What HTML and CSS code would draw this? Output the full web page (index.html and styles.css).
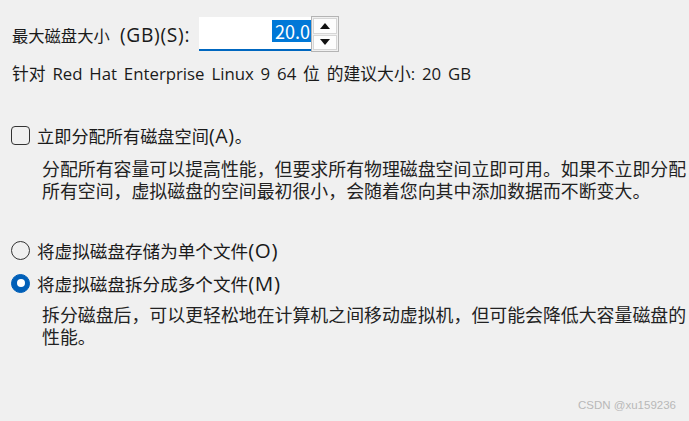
FILE: index.html
```html
<!DOCTYPE html>
<html lang="zh-CN">
<head>
<meta charset="utf-8">
<title>磁盘容量</title>
<link rel="stylesheet" href="styles.css">
</head>
<body>
<div class="page">
  <div class="size-row">
    <span class="size-label">最大磁盘大小 <span class="lat">(GB)(S):</span></span>
    <div class="spin">
      <div class="spin-field"><span class="spin-value">20.0</span></div>
      <div class="spin-buttons">
        <div class="spin-btn"><svg width="10" height="6" viewBox="0 0 10 6"><path d="M0 6 L5 0 L10 6 Z" fill="#111"/></svg></div>
        <div class="spin-btn"><svg width="10" height="6" viewBox="0 0 10 6"><path d="M0 0 L10 0 L5 6 Z" fill="#111"/></svg></div>
      </div>
    </div>
  </div>
  <div class="recommend">针对 Red Hat Enterprise Linux 9 64 位 的建议大小: 20 GB</div>

  <div class="option check-option">
    <span class="checkbox"></span>
    <span class="opt-label">立即分配所有磁盘空间<span class="lat">(A)</span>。</span>
  </div>
  <div class="desc desc-alloc">分配所有容量可以提高性能，但要求所有物理磁盘空间立即可用。如果不立即分配<br>所有空间，虚拟磁盘的空间最初很小，会随着您向其中添加数据而不断变大。</div>

  <div class="option radio-first">
    <span class="radio"></span>
    <span class="opt-label radio-label">将虚拟磁盘存储为单个文件<span class="lat">(O)</span></span>
  </div>
  <div class="option radio-second">
    <span class="radio checked"></span>
    <span class="opt-label radio-label">将虚拟磁盘拆分成多个文件<span class="lat">(M)</span></span>
  </div>
  <div class="desc desc-split">拆分磁盘后，可以更轻松地在计算机之间移动虚拟机，但可能会降低大容量磁盘的<br>性能。</div>
</div>
<div class="watermark">CSDN @xu159236</div>
</body>
</html>
```
FILE: styles.css
```css
html, body {
  margin: 0;
  padding: 0;
}
body {
  width: 689px;
  height: 421px;
  overflow: hidden;
  background: #f0f0f0;
  color: #1a1a1a;
  font-family: "Open Sans", "Noto Sans CJK SC", sans-serif;
  position: relative;
}
.page {
  padding: 16px 0 0 12px;
  display: flex;
  flex-direction: column;
}
.size-row {
  display: flex;
  align-items: center;
  height: 36px;
}
.size-label {
  font-size: 16.3px;
  width: 187px;
  white-space: nowrap;
  word-spacing: 6px;
}
.lat {
  font-size: 1.14em;
  letter-spacing: 0.6px;
}
.size-label .lat {
  font-size: 1.18em;
  letter-spacing: 0.7px;
}
.spin {
  display: flex;
  height: 36px;
}
.spin-field {
  width: 112px;
  height: 32px;
  margin-top: 1px;
  background: #fff;
  border-bottom: 2px solid #0067c0;
  display: flex;
  align-items: center;
  justify-content: flex-end;
  box-sizing: content-box;
}
.spin-value {
  background: #0078d7;
  color: #fff;
  font-family: "Noto Sans CJK SC", sans-serif;
  font-size: 18px;
  line-height: 22px;
  height: 22px;
  padding: 0 1px 0 3px;
  margin-bottom: 4px;
}
.spin-buttons {
  width: 24px;
  border: 1px solid #b4b4b4;
  display: flex;
  flex-direction: column;
  gap: 1px;
  padding: 1px;
  background: #f0f0f0;
}
.spin-btn {
  flex: 1;
  background: #fdfdfd;
  border: 1px solid #d6d6d6;
  display: flex;
  align-items: center;
  justify-content: center;
}
.recommend {
  font-size: 16.8px;
  margin-top: 10px;
  line-height: 24px;
  white-space: nowrap;
  word-spacing: 2.5px;
}
.option {
  display: flex;
  align-items: center;
  margin-left: -1px;
  height: 24px;
}
.opt-label {
  font-size: 17.2px;
  margin-left: 7px;
  white-space: nowrap;
}
.radio-label {
  font-size: 17.6px;
}
.radio-label .lat {
  font-size: 1.17em;
}
.check-option {
  margin-top: 37px;
}
.checkbox {
  width: 17px;
  height: 17px;
  border: 1.5px solid #333;
  border-radius: 4px;
}
.radio {
  width: 17px;
  height: 17px;
  border: 1.5px solid #333;
  border-radius: 50%;
  position: relative;
}
.radio.checked {
  border-color: #005fb8;
  background: #005fb8;
}
.radio.checked::after {
  content: "";
  position: absolute;
  left: 4.5px;
  top: 4.5px;
  width: 8px;
  height: 8px;
  border-radius: 50%;
  background: #fff;
}
.desc {
  font-family: "Noto Sans CJK SC", sans-serif;
  font-size: 17.9px;
  line-height: 22px;
  margin-left: 30px;
  white-space: nowrap;
  color: #222;
}
.desc-alloc {
  margin-top: 10px;
}
.radio-first {
  margin-top: 37px;
}
.radio-second {
  margin-top: 9px;
}
.desc-split {
  margin-top: 8px;
}
.watermark {
  position: absolute;
  left: 578px;
  top: 399px;
  font-size: 11.5px;
  color: #b8b8b8;
  font-family: "Liberation Sans", sans-serif;
}
```
